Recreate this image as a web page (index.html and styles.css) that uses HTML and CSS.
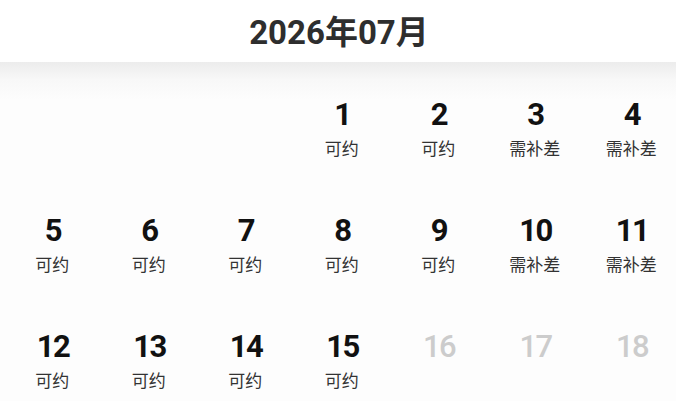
FILE: index.html
```html
<!DOCTYPE html>
<html lang="zh">
<head>
<meta charset="utf-8">
<title>2026年07月</title>
<link rel="stylesheet" href="styles.css">
</head>
<body>
<div class="page">
  <header class="header">
    <h1 class="title">2026年07月</h1>
  </header>
  <main class="calendar">
    <div class="day empty"></div>
    <div class="day empty"></div>
    <div class="day empty"></div>
    <div class="day"><span class="num">1</span><span class="label">可约</span></div>
    <div class="day"><span class="num">2</span><span class="label">可约</span></div>
    <div class="day"><span class="num">3</span><span class="label">需补差</span></div>
    <div class="day"><span class="num">4</span><span class="label">需补差</span></div>
    <div class="day"><span class="num">5</span><span class="label">可约</span></div>
    <div class="day"><span class="num">6</span><span class="label">可约</span></div>
    <div class="day"><span class="num">7</span><span class="label">可约</span></div>
    <div class="day"><span class="num">8</span><span class="label">可约</span></div>
    <div class="day"><span class="num">9</span><span class="label">可约</span></div>
    <div class="day"><span class="num">10</span><span class="label">需补差</span></div>
    <div class="day"><span class="num">11</span><span class="label">需补差</span></div>
    <div class="day"><span class="num">12</span><span class="label">可约</span></div>
    <div class="day"><span class="num">13</span><span class="label">可约</span></div>
    <div class="day"><span class="num">14</span><span class="label">可约</span></div>
    <div class="day"><span class="num">15</span><span class="label">可约</span></div>
    <div class="day disabled"><span class="num">16</span><span class="label"></span></div>
    <div class="day disabled"><span class="num">17</span><span class="label"></span></div>
    <div class="day disabled"><span class="num">18</span><span class="label"></span></div>
  </main>
</div>
</body>
</html>
```

FILE: styles.css
```css
html, body {
  margin: 0;
  padding: 0;
  background: #fdfdfd;
}

.page {
  width: 676px;
  height: 401px;
  overflow: hidden;
  font-family: Roboto, "Noto Sans CJK SC", sans-serif;
  background: linear-gradient(to bottom, #ffffff 0, #ffffff 62px, #ececec 62px, #f8f8f8 80px, #fdfdfd 100px, #fdfdfd 100%);
}

.header {
  height: 62px;
  display: flex;
  align-items: center;
  justify-content: center;
  background: #ffffff;
}

.title {
  margin: 0;
  padding: 4px 0 0 2px;
  font-family: Roboto, "Noto Sans CJK SC", sans-serif;
  font-weight: 700;
  font-size: 33px;
  line-height: 40px;
  color: #2e2e2e;
}

.calendar {
  display: grid;
  grid-template-columns: repeat(7, 96.5px);
  grid-auto-rows: 116px;
  padding-left: 4px;
  padding-top: 35px;
}

.day {
  display: flex;
  flex-direction: column;
  align-items: center;
}

.num {
  font-family: Roboto, sans-serif;
  font-weight: 700;
  font-size: 31px;
  line-height: 36px;
  letter-spacing: -1.5px;
  color: #111111;
  margin-right: -1.5px;
}

.label {
  margin-top: 5px;
  font-family: "Noto Sans CJK SC", sans-serif;
  font-size: 17px;
  line-height: 20px;
  color: #333333;
}

.disabled .num {
  color: #cccccc;
  font-weight: 500;
}
```
